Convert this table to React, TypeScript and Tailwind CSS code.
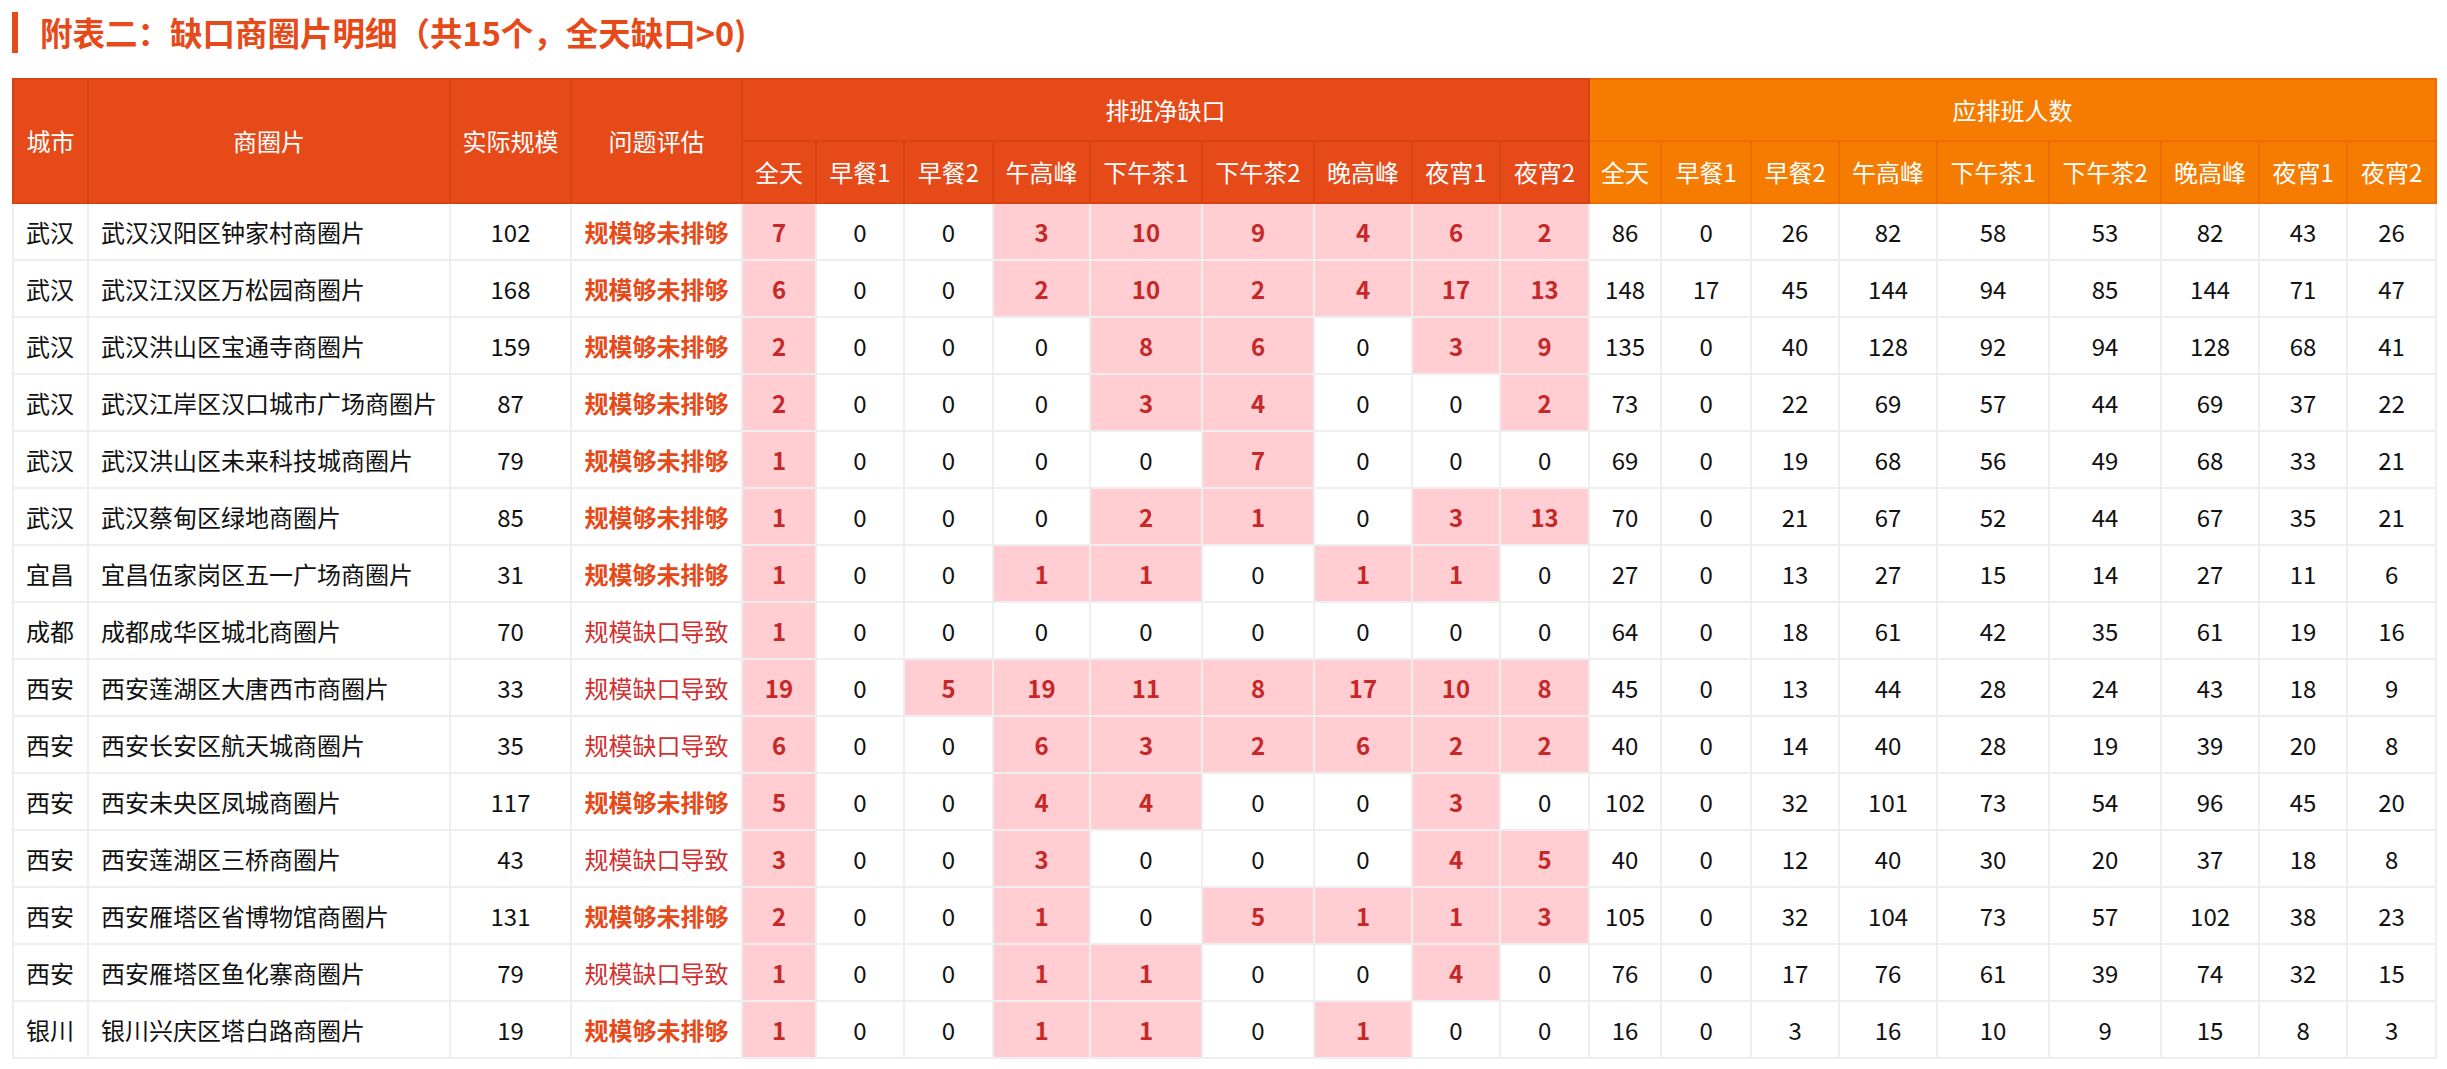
type Row = {
  city: string;
  area: string;
  scale: number;
  issue: "规模够未排够" | "规模缺口导致";
  gap: number[];
  need: number[];
};

const slots = ["全天", "早餐1", "早餐2", "午高峰", "下午茶1", "下午茶2", "晚高峰", "夜宵1", "夜宵2"];

const gapWidths = [74, 88, 89, 97, 112, 112, 98, 88, 89];
const needWidths = [72, 90, 88, 98, 112, 112, 98, 88, 89];

const rows: Row[] = [
  { city: "武汉", area: "武汉汉阳区钟家村商圈片", scale: 102, issue: "规模够未排够", gap: [7, 0, 0, 3, 10, 9, 4, 6, 2], need: [86, 0, 26, 82, 58, 53, 82, 43, 26] },
  { city: "武汉", area: "武汉江汉区万松园商圈片", scale: 168, issue: "规模够未排够", gap: [6, 0, 0, 2, 10, 2, 4, 17, 13], need: [148, 17, 45, 144, 94, 85, 144, 71, 47] },
  { city: "武汉", area: "武汉洪山区宝通寺商圈片", scale: 159, issue: "规模够未排够", gap: [2, 0, 0, 0, 8, 6, 0, 3, 9], need: [135, 0, 40, 128, 92, 94, 128, 68, 41] },
  { city: "武汉", area: "武汉江岸区汉口城市广场商圈片", scale: 87, issue: "规模够未排够", gap: [2, 0, 0, 0, 3, 4, 0, 0, 2], need: [73, 0, 22, 69, 57, 44, 69, 37, 22] },
  { city: "武汉", area: "武汉洪山区未来科技城商圈片", scale: 79, issue: "规模够未排够", gap: [1, 0, 0, 0, 0, 7, 0, 0, 0], need: [69, 0, 19, 68, 56, 49, 68, 33, 21] },
  { city: "武汉", area: "武汉蔡甸区绿地商圈片", scale: 85, issue: "规模够未排够", gap: [1, 0, 0, 0, 2, 1, 0, 3, 13], need: [70, 0, 21, 67, 52, 44, 67, 35, 21] },
  { city: "宜昌", area: "宜昌伍家岗区五一广场商圈片", scale: 31, issue: "规模够未排够", gap: [1, 0, 0, 1, 1, 0, 1, 1, 0], need: [27, 0, 13, 27, 15, 14, 27, 11, 6] },
  { city: "成都", area: "成都成华区城北商圈片", scale: 70, issue: "规模缺口导致", gap: [1, 0, 0, 0, 0, 0, 0, 0, 0], need: [64, 0, 18, 61, 42, 35, 61, 19, 16] },
  { city: "西安", area: "西安莲湖区大唐西市商圈片", scale: 33, issue: "规模缺口导致", gap: [19, 0, 5, 19, 11, 8, 17, 10, 8], need: [45, 0, 13, 44, 28, 24, 43, 18, 9] },
  { city: "西安", area: "西安长安区航天城商圈片", scale: 35, issue: "规模缺口导致", gap: [6, 0, 0, 6, 3, 2, 6, 2, 2], need: [40, 0, 14, 40, 28, 19, 39, 20, 8] },
  { city: "西安", area: "西安未央区凤城商圈片", scale: 117, issue: "规模够未排够", gap: [5, 0, 0, 4, 4, 0, 0, 3, 0], need: [102, 0, 32, 101, 73, 54, 96, 45, 20] },
  { city: "西安", area: "西安莲湖区三桥商圈片", scale: 43, issue: "规模缺口导致", gap: [3, 0, 0, 3, 0, 0, 0, 4, 5], need: [40, 0, 12, 40, 30, 20, 37, 18, 8] },
  { city: "西安", area: "西安雁塔区省博物馆商圈片", scale: 131, issue: "规模够未排够", gap: [2, 0, 0, 1, 0, 5, 1, 1, 3], need: [105, 0, 32, 104, 73, 57, 102, 38, 23] },
  { city: "西安", area: "西安雁塔区鱼化寨商圈片", scale: 79, issue: "规模缺口导致", gap: [1, 0, 0, 1, 1, 0, 0, 4, 0], need: [76, 0, 17, 76, 61, 39, 74, 32, 15] },
  { city: "银川", area: "银川兴庆区塔白路商圈片", scale: 19, issue: "规模够未排够", gap: [1, 0, 0, 1, 1, 0, 1, 0, 0], need: [16, 0, 3, 16, 10, 9, 15, 8, 3] },
];

const redTh = "border-2 border-[#d84315] bg-[#e64a19] font-normal text-white";
const orangeTh = "border-2 border-[#ef6c00] bg-[#f57c00] font-normal text-white";
const td = "h-[57px] border-2 border-[#eeeeee] px-3 text-[#111111]";

export default function App() {
  return (
    <div className="min-h-screen bg-white pl-3 pt-3 font-['Noto_Sans_CJK_SC','Noto_Sans',sans-serif]">
      <div className="flex h-[41px] items-center border-l-[6px] border-[#e64a19] pl-[22px]">
        <h2 className="text-[32.5px] font-bold leading-none text-[#e64a19]">
          附表二：缺口商圈片明细（共15个，全天缺口&gt;0)
        </h2>
      </div>

      <table className="mt-[25px] w-[2423px] table-fixed border-collapse text-[24px] leading-none">
        <colgroup>
          <col className="w-[75px]" />
          <col className="w-[362px]" />
          <col className="w-[121px]" />
          <col className="w-[171px]" />
          {gapWidths.map((w, i) => (
            <col key={"g" + i} style={{ width: w }} />
          ))}
          {needWidths.map((w, i) => (
            <col key={"n" + i} style={{ width: w }} />
          ))}
        </colgroup>
        <thead>
          <tr className="h-[62px]">
            <th rowSpan={2} className={redTh}>城市</th>
            <th rowSpan={2} className={redTh}>商圈片</th>
            <th rowSpan={2} className={redTh}>实际规模</th>
            <th rowSpan={2} className={redTh}>问题评估</th>
            <th colSpan={9} className={redTh}>排班净缺口</th>
            <th colSpan={9} className={orangeTh}>应排班人数</th>
          </tr>
          <tr className="h-[62px]">
            {slots.map((s) => (
              <th key={"gh" + s} className={redTh}>{s}</th>
            ))}
            {slots.map((s) => (
              <th key={"nh" + s} className={orangeTh}>{s}</th>
            ))}
          </tr>
        </thead>
        <tbody>
          {rows.map((r) => (
            <tr key={r.area}>
              <td className={td + " text-left"}>{r.city}</td>
              <td className={td + " text-left"}>{r.area}</td>
              <td className={td + " text-center"}>{r.scale}</td>
              <td
                className={
                  td +
                  " text-center " +
                  (r.issue === "规模够未排够" ? "font-bold !text-[#e64a19]" : "!text-[#d32f2f]")
                }
              >
                {r.issue}
              </td>
              {r.gap.map((v, i) =>
                v > 0 ? (
                  <td key={"g" + i} className={td + " bg-[#ffcdd2] text-center font-bold !text-[#c62828]"}>
                    {v}
                  </td>
                ) : (
                  <td key={"g" + i} className={td + " text-center"}>
                    {v}
                  </td>
                )
              )}
              {r.need.map((v, i) => (
                <td key={"n" + i} className={td + " text-center"}>
                  {v}
                </td>
              ))}
            </tr>
          ))}
        </tbody>
      </table>
    </div>
  );
}
